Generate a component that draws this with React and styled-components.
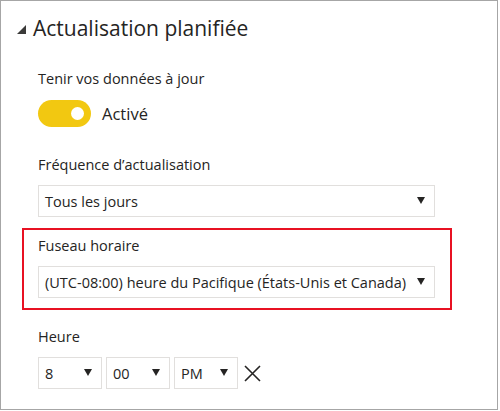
import React, { useState } from "react";
import styled, { createGlobalStyle } from "styled-components";

const GlobalStyle = createGlobalStyle`
  html, body {
    margin: 0;
    padding: 0;
    background: #ffffff;
  }
  body {
    font-family: "Open Sans", "Noto Sans", sans-serif;
    color: #252423;
  }
`;

const Caret = () => (
  <svg width="9" height="9" viewBox="0 0 9 9">
    <polygon points="9,0 9,9 0,9" fill="#3b3a39" />
  </svg>
);

const Arrow = () => (
  <svg width="8" height="7" viewBox="0 0 8 7">
    <polygon points="0,0 8,0 4,7" fill="#252423" />
  </svg>
);

const Close = () => (
  <svg width="17" height="17" viewBox="0 0 17 17">
    <path d="M1 1 L16 16 M16 1 L1 16" stroke="#252423" strokeWidth="1.6" />
  </svg>
);

const App = () => {
  const [on, setOn] = useState(true);

  return (
    <>
      <GlobalStyle />
      <Panel>
        <Title>
          <Caret />
          <span>Actualisation planifiée</span>
        </Title>

        <Body>
          <Field>
            <Label>Tenir vos données à jour</Label>
            <ToggleRow>
              <Toggle on={on} onClick={() => setOn(!on)}>
                <Knob on={on} />
              </Toggle>
              <ToggleText>{on ? "Activé" : "Désactivé"}</ToggleText>
            </ToggleRow>
          </Field>

          <Field spaced>
            <Label>Fréquence d’actualisation</Label>
            <Select width="397px">
              <span>Tous les jours</span>
              <Arrow />
            </Select>
          </Field>

          <Field highlighted>
            <Label>Fuseau horaire</Label>
            <Select width="397px">
              <span>(UTC-08:00) heure du Pacifique (États-Unis et Canada)</span>
              <Arrow />
            </Select>
          </Field>

          <Field last>
            <Label>Heure</Label>
            <TimeRow>
              <Select width="64px">
                <span>8</span>
                <Arrow />
              </Select>
              <Select width="64px">
                <span>00</span>
                <Arrow />
              </Select>
              <Select width="64px">
                <span>PM</span>
                <Arrow />
              </Select>
              <ClearButton>
                <Close />
              </ClearButton>
            </TimeRow>
          </Field>
        </Body>
      </Panel>
    </>
  );
};

const Panel = styled.div`
  width: 498px;
  height: 410px;
  box-sizing: border-box;
  border: 1px solid #a6a6a6;
  padding-top: 12px;
  overflow: hidden;
`;

const Title = styled.h2`
  margin: 0;
  display: flex;
  align-items: center;
  gap: 7px;
  padding-left: 16px;
  font-size: 21px;
  font-weight: 400;
  line-height: 30px;
  color: #252423;

  svg {
    margin-top: 3px;
  }
`;

const Body = styled.div`
  display: flex;
  flex-direction: column;
  padding-left: 21px;
  padding-top: 24px;
`;

const Field = styled.div`
  display: flex;
  flex-direction: column;
  align-items: flex-start;
  width: 430px;
  box-sizing: border-box;
  border: 2px solid ${(p) => (p.highlighted ? "#e81123" : "transparent")};
  padding: ${(p) => (p.highlighted ? "6px 0 10px 14px" : "0 0 0 14px")};
  margin-top: ${(p) =>
    p.spaced ? "24px" : p.highlighted ? "9px" : p.last ? "15px" : "0"};
`;

const Label = styled.div`
  font-size: 14.5px;
  line-height: 20px;
  margin-bottom: 10px;
  white-space: nowrap;
`;

const ToggleRow = styled.div`
  display: flex;
  align-items: center;
  gap: 11px;
  margin-top: 1px;
`;

const Toggle = styled.button`
  width: 53px;
  height: 27px;
  border-radius: 14px;
  border: none;
  background: ${(p) => (p.on ? "#f2c811" : "#a6a6a6")};
  display: flex;
  align-items: center;
  justify-content: ${(p) => (p.on ? "flex-end" : "flex-start")};
  padding: 0 7px;
  cursor: pointer;
`;

const Knob = styled.span`
  width: 13px;
  height: 13px;
  border-radius: 50%;
  background: #ffffff;
`;

const ToggleText = styled.span`
  font-size: 16.5px;
  line-height: 22px;
`;

const Select = styled.div`
  width: ${(p) => p.width};
  height: 32px;
  box-sizing: border-box;
  border: 1px solid #e1dfdd;
  display: flex;
  align-items: center;
  justify-content: space-between;
  padding: 0 9px 0 6px;
  font-size: 14.5px;
  white-space: nowrap;

  svg {
    flex-shrink: 0;
    margin-top: -2px;
  }
`;

const TimeRow = styled.div`
  display: flex;
  align-items: center;
  gap: 4px;
`;

const ClearButton = styled.button`
  border: none;
  background: none;
  padding: 0;
  margin-left: 2px;
  display: flex;
  cursor: pointer;
`;

export default App;
